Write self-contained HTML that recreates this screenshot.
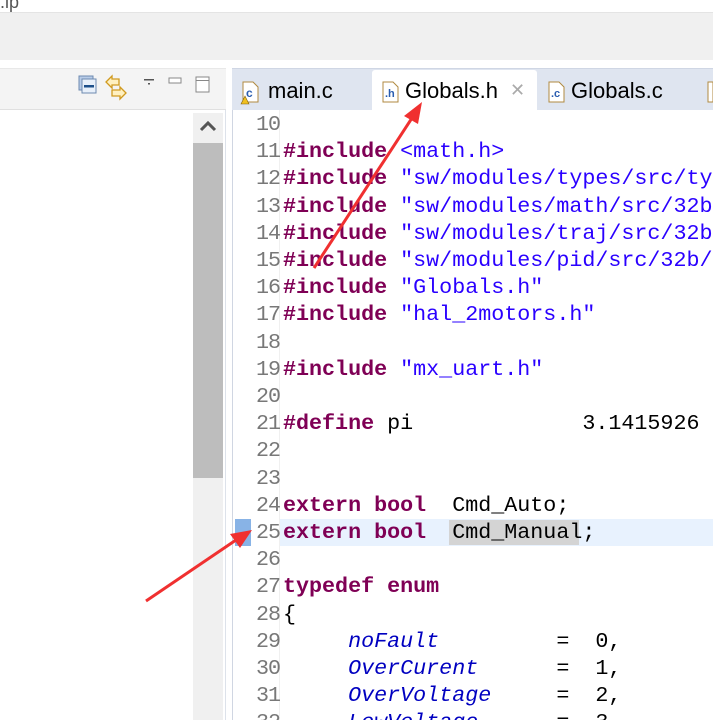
<!DOCTYPE html>
<html><head><meta charset="utf-8"><style>
*{margin:0;padding:0;box-sizing:border-box}
body{width:713px;height:720px;overflow:hidden;background:#fff;position:relative;font-family:"Liberation Sans",sans-serif}
.abs{position:absolute}
.code{font-family:"Liberation Mono",monospace;font-size:21.7px;white-space:pre;line-height:27.2px}
.ln{position:absolute;left:250px;width:30px;text-align:right;color:#787878;font-family:"Liberation Mono",monospace;font-size:21.7px;line-height:27.2px;letter-spacing:-1px}
.k{color:#7f0055;font-weight:bold}
.s{color:#2a00ff}
.e{color:#0000c0;font-style:italic}
.tab{position:absolute;top:78px;font-size:22px;color:#000}
</style></head><body>
<div class="abs" style="left:0;top:-8px;font-size:18px;color:#555">.ip</div>
<div class="abs" style="left:0;top:12px;width:713px;height:48px;background:#f0f0f0;border-top:1px solid #e4e4e4"></div>
<div class="abs" style="left:0;top:68px;width:226px;height:652px;background:#fff;border-right:1px solid #dde2ea"></div>
<div class="abs" style="left:0;top:68px;width:226px;height:42px;background:#f4f4f4;border-bottom:1px solid #e0e0e0;border-top:1px solid #e8e8e8"></div>
<svg class="abs" style="left:76px;top:74px" width="140" height="30">
<rect x="3" y="2" width="14" height="14" fill="#b8cce8" stroke="#6e8ab0"/><rect x="6" y="5" width="14" height="14" fill="#e8f0fa" stroke="#6e8ab0"/><rect x="8" y="11" width="10" height="2.5" fill="#1d4f8a"/>
<path d="M30 8 L36 2 V5 H43 V11 H36 V14 Z" fill="#fff0c0" stroke="#d09a20" stroke-width="1.3"/>
<path d="M50 19 L44 13 V16 H36 V22 H44 V25 Z" fill="#fff0c0" stroke="#d09a20" stroke-width="1.3"/>
<rect x="68" y="5" width="10" height="1.5" fill="#555"/><rect x="72" y="9" width="2" height="1.5" fill="#555"/>
<rect x="93" y="4" width="12" height="5" fill="#fff" stroke="#888"/>
<rect x="120" y="3" width="13" height="15" fill="#fff" stroke="#888"/><line x1="120" y1="6.5" x2="133" y2="6.5" stroke="#888"/>
</svg>
<div class="abs" style="left:193px;top:113px;width:30px;height:607px;background:#f0f0f0"></div>
<div class="abs" style="left:193px;top:143px;width:30px;height:335px;background:#bdbdbd"></div>
<svg class="abs" style="left:199px;top:119px" width="18" height="14"><path d="M2 11 L9 4 L16 11" fill="none" stroke="#555" stroke-width="3"/></svg>
<div class="abs" style="left:232px;top:68px;width:481px;height:42px;background:#dfe5f0;border-top:1px solid #cfd6e4"></div>
<div class="abs" style="left:372px;top:70px;width:165px;height:40px;background:#fff;border-radius:3px 3px 0 0"></div>
<div class="abs" style="left:232px;top:110px;width:481px;height:610px;background:#fff;border-left:1px solid #d0d6e2"></div>
<div class="abs" style="left:279px;top:110px;width:1px;height:610px;background:#f0f0f0"></div>
<svg class="abs" style="left:240px;top:80px" width="22" height="26"><path d="M3 2 H13 L18 7 V22 H3 Z" fill="#fff" stroke="#b08a40"/><text x="6" y="17" font-size="12" fill="#2a5db0" font-family="Liberation Sans" font-weight="bold">c</text><path d="M1 24 L5 16 L9 24 Z" fill="#f0c020" stroke="#806010" stroke-width=".6"/></svg>
<div class="tab" style="left:268px">main.c</div>
<svg class="abs" style="left:380px;top:80px" width="22" height="26"><path d="M3 2 H13 L18 7 V22 H3 Z" fill="#fff" stroke="#b08a40"/><text x="5" y="17" font-size="11" fill="#2a5db0" font-family="Liberation Sans" font-weight="bold">.h</text></svg>
<div class="tab" style="left:405px">Globals.h</div>
<div class="abs" style="left:510px;top:80px;font-size:18px;color:#aaa">✕</div>
<svg class="abs" style="left:546px;top:80px" width="22" height="26"><path d="M3 2 H13 L18 7 V22 H3 Z" fill="#fff" stroke="#b08a40"/><text x="5" y="17" font-size="11" fill="#2a5db0" font-family="Liberation Sans" font-weight="bold">.c</text></svg>
<div class="tab" style="left:571px">Globals.c</div>
<svg class="abs" style="left:705px;top:80px" width="8" height="26"><path d="M3 2 H8 V22 H3 Z" fill="#fff" stroke="#b08a40"/></svg>
<div class="abs" style="left:280px;top:519px;width:433px;height:27px;background:#e8f2fe"></div>
<div class="abs" style="left:449px;top:520px;width:130px;height:25px;background:#d4d4d4"></div>
<div class="abs" style="left:235px;top:519px;width:16px;height:27px;background:#6aa0e0;opacity:.8"></div>
<div class="code abs" style="left:283px;top:111px;width:430px;height:609px;overflow:hidden"><span> </span>
<span class="k">#include</span> <span class="s">&lt;math.h&gt;</span>
<span class="k">#include</span> <span class="s">"sw/modules/types/src/types.h"</span>
<span class="k">#include</span> <span class="s">"sw/modules/math/src/32b/math.h"</span>
<span class="k">#include</span> <span class="s">"sw/modules/traj/src/32b/traj.h"</span>
<span class="k">#include</span> <span class="s">"sw/modules/pid/src/32b/pid.h"</span>
<span class="k">#include</span> <span class="s">"Globals.h"</span>
<span class="k">#include</span> <span class="s">"hal_2motors.h"</span>

<span class="k">#include</span> <span class="s">"mx_uart.h"</span>

<span class="k">#define</span> pi             3.1415926


<span class="k">extern</span> <span class="k">bool</span>  Cmd_Auto;
<span class="k">extern</span> <span class="k">bool</span>  Cmd_Manual;

<span class="k">typedef</span> <span class="k">enum</span>
{
     <span class="e">noFault</span>         =  0,
     <span class="e">OverCurent</span>      =  1,
     <span class="e">OverVoltage</span>     =  2,
     <span class="e">LowVoltage</span>      =  3,</div>
<div class="ln" style="top:111px;height:609px;overflow:hidden">10<br>11<br>12<br>13<br>14<br>15<br>16<br>17<br>18<br>19<br>20<br>21<br>22<br>23<br>24<br>25<br>26<br>27<br>28<br>29<br>30<br>31<br>32</div>
<svg class="abs" style="left:0;top:0" width="713" height="720">
<line x1="314" y1="268" x2="412" y2="118" stroke="#f03030" stroke-width="3"/>
<path d="M422 102 L404 116 L418 124 Z" fill="#f03030"/>
<line x1="146" y1="601" x2="236" y2="540" stroke="#f03030" stroke-width="3"/>
<path d="M252 530 L230 534 L240 548 Z" fill="#f03030"/>
</svg>
</body></html>
